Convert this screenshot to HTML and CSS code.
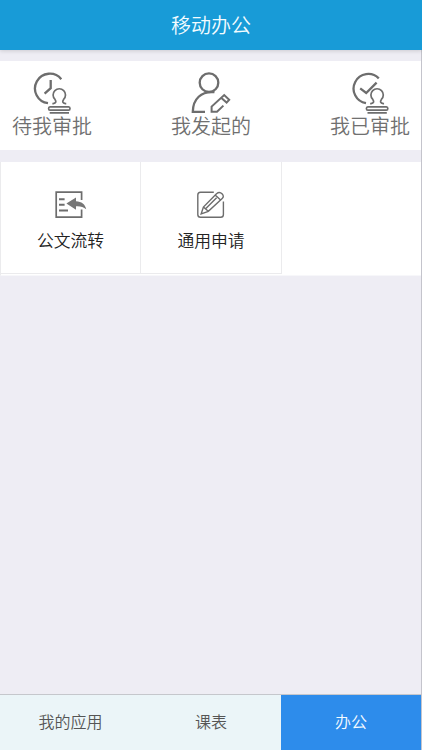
FILE: index.html
```html
<!DOCTYPE html>
<html lang="zh-CN">
<head>
<meta charset="utf-8">
<title>移动办公</title>
<link rel="stylesheet" href="styles.css">
</head>
<body>
<div class="app">
  <header class="header">移动办公</header>
  <nav class="summary">
    <a class="summary-item">
      <svg width="40" height="42" viewBox="32 72 40 42"><path d="M61.3 79.2A14.8 14.8 0 1 0 48 103.2M50.7 80V88.2L44.6 93.7"/><path class="thin" d="M53.2 104.6V103.6C56 103.2 56.6 101.6 55 99.4A6.2 6.2 0 1 1 63.6 99.4C62 101.6 62.6 103.2 65.4 103.6V104.6M50 106.8H68.6Q70 106.8 70 108.5T68.6 110.2H50Q48.6 110.2 48.6 108.5T50 106.8ZM49.7 112.8H69"/></svg>
      <span>待我审批</span>
    </a>
    <a class="summary-item">
      <svg width="40" height="42" viewBox="191 72 40 42"><circle cx="209" cy="82.7" r="9.3"/><path d="M214.5 92.2C201 91 193 99 192.8 111.8H205"/><path class="pencil" d="M223.4 105.6L217 111.8H211.6V106.6L224.2 95L229.2 99.8L226.6 102.6L221.4 98"/></svg>
      <span>我发起的</span>
    </a>
    <a class="summary-item">
      <svg width="40" height="42" viewBox="350 72 40 42"><path d="M378.8 78.4A14.7 14.7 0 1 0 366 103.2M360.2 88.4L366.2 93L376.6 82.6"/><path class="thin" d="M371 104.6V103.6C373.8 103.2 374.4 101.6 372.8 99.4A6.2 6.2 0 1 1 381.4 99.4C379.8 101.6 380.4 103.2 383.2 103.6V104.6M367.8 106.8H386.4Q387.8 106.8 387.8 108.5T386.4 110.2H367.8Q366.4 110.2 366.4 108.5T367.8 106.8ZM367.5 112.8H386.8"/></svg>
      <span>我已审批</span>
    </a>
  </nav>
  <main class="grid">
    <a class="tile">
      <svg width="34" height="30" viewBox="54 190 34 30"><path class="thin" d="M81.6 200V192.2H56.2V217.2H81.6V209.5"/><path class="lines" d="M59 199.2H64.6M59 204.8H64.6M59 210.5H68"/><path class="fill" d="M66.4 203.6L76 197.4V201.3C81.5 201.5 85.3 204.3 86.2 209.3C83.4 206.7 80.5 206 76 206.2V209.8Z"/></svg>
      <span>公文流转</span>
    </a>
    <a class="tile">
      <svg width="34" height="30" viewBox="194 190 34 30"><path class="pen" d="M213.8 192.2H200.5Q197.8 192.2 197.8 195V214.5Q197.8 217.3 200.5 217.3H220.7Q223.4 217.3 223.4 214.5V201.5M201.2 213.8L203.4 207L216.5 193.7Q219.5 191.2 222 193.8T222.2 198.5L208.3 211.3ZM203.4 207L208.3 211.3M205.6 208.8L216.6 197.7M215.2 195L220.6 200"/></svg>
      <span>通用申请</span>
    </a>
    <div class="tile blank"></div>
  </main>
  <footer class="tabs">
    <a class="tab">我的应用</a>
    <a class="tab">课表</a>
    <a class="tab active">办公</a>
  </footer>
</div>
</body>
</html>
```
FILE: styles.css
```css
* { box-sizing: border-box; }
body { margin: 0; font-family: "Noto Sans CJK SC", sans-serif; font-weight: 350; }
.app {
  display: flex;
  flex-direction: column;
  height: 750px;
  background: #eeedf4;
  border-right: 1px solid #c4c4cc;
}
.header {
  height: 50px;
  flex: none;
  margin-right: -1px;
  background: #189bd7;
  color: #f4fcff;
  font-size: 20px;
  line-height: 49px;
  text-align: center;
  box-shadow: 0 1px 4px rgba(0, 0, 0, .15);
}
.summary {
  display: flex;
  justify-content: space-between;
  height: 89px;
  margin-top: 11px;
  padding: 11px 11px 0 12px;
  background: #fff;
}
.summary-item {
  display: flex;
  flex-direction: column;
  align-items: center;
  width: 80px;
  color: #707070;
  font-size: 20px;
  line-height: 24px;
  white-space: nowrap;
}
svg { display: block; fill: none; stroke: #6d6d6d; stroke-width: 2.3; }
.thin { stroke-width: 1.7; }
.pencil { stroke-width: 2; }
.lines { stroke-width: 1.9; }
.fill { fill: #777; stroke: none; }
.pen { stroke-width: 1.4; }
.grid {
  display: grid;
  grid-template-columns: 140px 141px 1fr;
  height: 114px;
  margin-top: 12px;
  background: #fff;
  border-left: 1px solid #ebebed;
  border-bottom: 1px solid #f7f7fa;
}
.tile {
  display: flex;
  flex-direction: column;
  align-items: center;
  height: 112px;
  padding: 28px 0 0;
  border-right: 1px solid #ebebed;
  border-bottom: 1px solid #ebebed;
  color: #222;
  font-size: 16.8px;
  line-height: 24px;
}
.tile span { margin-top: 8px; }
.tile.blank { border: 0; }
.tabs {
  display: grid;
  grid-template-columns: 141px 140px 1fr;
  height: 56px;
  margin-top: auto;
  border-top: 1px solid #c5c7cc;
}
.tab {
  background: #ebf5f8;
  color: #555;
  font-size: 16px;
  line-height: 53px;
  text-align: center;
}
.tab.active { background: #2d8ceb; color: #f4faff; }
```
